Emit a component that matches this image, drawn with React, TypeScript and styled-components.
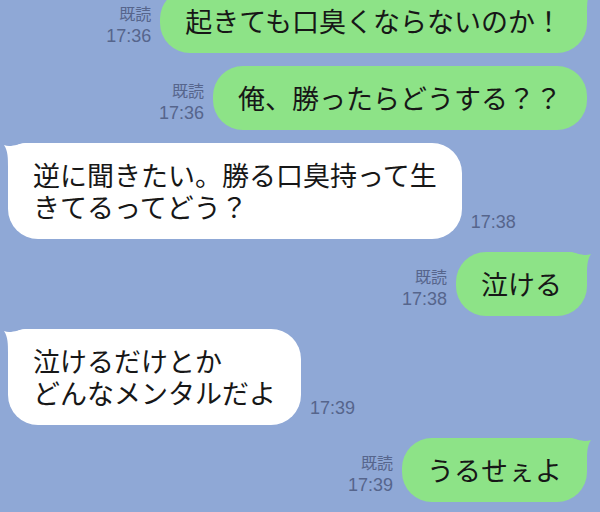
import React from 'react';
import styled, { createGlobalStyle } from 'styled-components';

const GlobalStyle = createGlobalStyle`
  html, body {
    margin: 0;
    padding: 0;
    background: #8fa8d6;
    overflow: hidden;
  }
`;

type Side = 'me' | 'them';

interface Message {
  side: Side;
  lines: string[];
  time: string;
  read?: boolean;
  tail?: boolean;
}

const messages: Message[] = [
  { side: 'me', lines: ['起きても口臭くならないのか！'], time: '17:36', read: true, tail: true },
  { side: 'me', lines: ['俺、勝ったらどうする？？'], time: '17:36', read: true },
  { side: 'them', lines: ['逆に聞きたい。勝る口臭持って生', 'きてるってどう？'], time: '17:38', tail: true },
  { side: 'me', lines: ['泣ける'], time: '17:38', read: true, tail: true },
  { side: 'them', lines: ['泣けるだけとか', 'どんなメンタルだよ'], time: '17:39', tail: true },
  { side: 'me', lines: ['うるせぇよ'], time: '17:39', read: true, tail: true },
];

const ChatWrapper = styled.div`
  width: 600px;
  height: 512px;
  background: #8fa8d6;
  overflow: hidden;
`;

const MessageList = styled.div`
  display: flex;
  flex-direction: column;
  gap: 13px;
  margin-top: -11px;
  padding: 0 13px 0 8px;
`;

const Row = styled.div<{ $side: Side }>`
  display: flex;
  flex-direction: ${p => (p.$side === 'me' ? 'row-reverse' : 'row')};
  justify-content: flex-start;
  align-items: flex-end;
  gap: 9px;
`;

const Bubble = styled.div<{ $side: Side; $tail: boolean }>`
  position: relative;
  display: flex;
  flex-direction: column;
  padding: 16px 25px;
  border-radius: 30px;
  ${p =>
    p.$tail &&
    (p.$side === 'me' ? 'border-top-right-radius: 18px;' : 'border-top-left-radius: 18px;')}
  background: ${p => (p.$side === 'me' ? '#8de387' : '#ffffff')};
  color: #171717;
  font-family: 'Noto Sans CJK JP', 'Noto Sans', sans-serif;
  font-size: 27px;
  white-space: nowrap;
`;

const Line = styled.span`
  display: block;
  height: 32px;
  line-height: 32px;
`;

const Tail = styled.svg<{ $side: Side }>`
  position: absolute;
  top: 0;
  width: 24px;
  height: 24px;
  ${p => (p.$side === 'me' ? 'right: -4px; transform: scaleX(-1);' : 'left: -4px;')}
`;

const Meta = styled.div<{ $side: Side }>`
  display: flex;
  flex-direction: column;
  align-items: ${p => (p.$side === 'me' ? 'flex-end' : 'flex-start')};
  padding-bottom: 6px;
  color: #56658c;
  font-family: 'Liberation Sans', 'Noto Sans CJK JP', sans-serif;
`;

const ReadMark = styled.span`
  font-size: 16px;
  line-height: 20px;
`;

const Time = styled.span`
  font-size: 18px;
  line-height: 22px;
`;

const BubbleTail: React.FC<{ side: Side; color: string }> = ({ side, color }) => (
  <Tail $side={side} viewBox="0 0 24 24">
    <path d="M0 2 C7 5 13 0.5 24 0 L24 24 L4 24 C4 15 4 8 0 2 Z" fill={color} />
  </Tail>
);

const App: React.FC = () => (
  <>
    <GlobalStyle />
    <ChatWrapper>
      <MessageList>
        {messages.map((m, i) => (
          <Row key={i} $side={m.side}>
            <Bubble $side={m.side} $tail={!!m.tail}>
              {m.tail && <BubbleTail side={m.side} color={m.side === 'me' ? '#8de387' : '#ffffff'} />}
              {m.lines.map((line, j) => (
                <Line key={j}>{line}</Line>
              ))}
            </Bubble>
            <Meta $side={m.side}>
              {m.read && <ReadMark>既読</ReadMark>}
              <Time>{m.time}</Time>
            </Meta>
          </Row>
        ))}
      </MessageList>
    </ChatWrapper>
  </>
);

export default App;
